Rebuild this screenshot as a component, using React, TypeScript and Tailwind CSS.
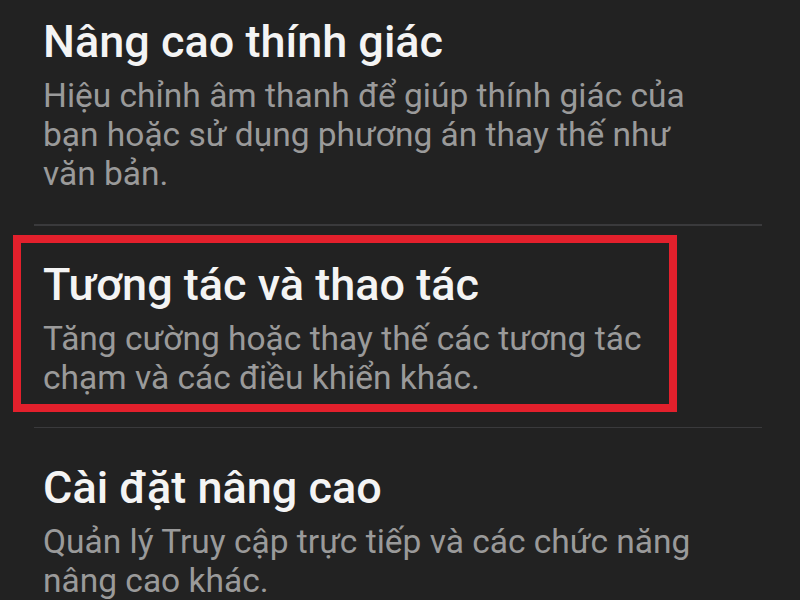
const font = { fontFamily: "Roboto, 'Noto Sans', sans-serif" };

function Item({ title, desc }: { title: string; desc: string }) {
  return (
    <div className="flex flex-col">
      <div className="text-[45px] leading-[52px] font-medium text-[#f4f4f4]">{title}</div>
      <div className="mt-[8px] text-[33.5px] leading-[39px] text-[#9a9a9a]">{desc}</div>
    </div>
  );
}

export default function App() {
  return (
    <div className="w-[800px] h-[600px] overflow-hidden bg-[#222222] flex flex-col" style={font}>
      <div className="pl-[43px] pr-[90px] pt-[16px]">
        <Item
          title="Nâng cao thính giác"
          desc="Hiệu chỉnh âm thanh để giúp thính giác của bạn hoặc sử dụng phương án thay thế như văn bản."
        />
      </div>
      <div className="mt-[31px] ml-[34px] w-[728px] h-[2px] bg-[#3a3a3c]" />
      <div className="mt-[9px] ml-[13px] w-[664px] border-[8px] border-[#e3202c] pl-[22px] pt-[16px] pb-[7px]">
        <Item
          title="Tương tác và thao tác"
          desc="Tăng cường hoặc thay thế các tương tác chạm và các điều khiển khác."
        />
      </div>
      <div className="mt-[15px] ml-[34px] w-[728px] h-[2px] bg-[#3a3a3c]" />
      <div className="pl-[43px] pr-[90px] pt-[34px]">
        <Item
          title="Cài đặt nâng cao"
          desc="Quản lý Truy cập trực tiếp và các chức năng nâng cao khác."
        />
      </div>
    </div>
  );
}
